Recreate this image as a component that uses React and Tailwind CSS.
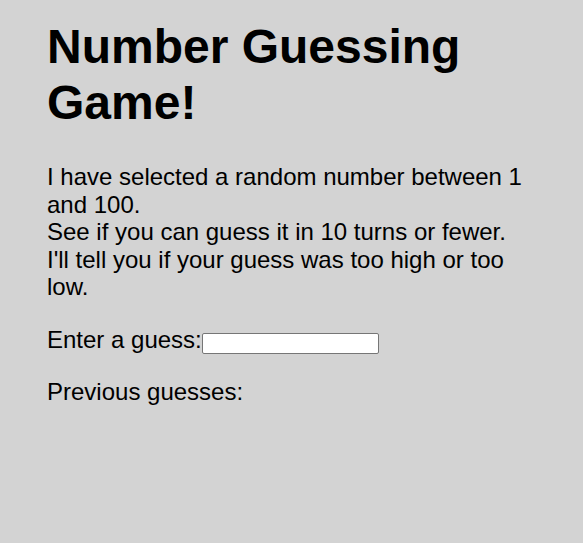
import React, { useState } from 'react';

export default function App() {
  const [guess, setGuess] = useState('');

  return (
    <div className="min-h-[543px] bg-[#d3d3d3] text-black font-['Liberation_Sans',Arial,sans-serif]">
      <div className="pl-[47px] pr-[40px] pt-[19px] text-[24px]">
        {/* Title */}
        <h1 className="text-[48px] font-bold leading-[56px] mb-[32px]">Number Guessing Game!</h1>

        {/* Intro */}
        <p className="leading-[27.6px] mb-[25px]">
          I have selected a random number between 1 and 100.
          <br />
          See if you can guess it in 10 turns or fewer.
          <br />
          I'll tell you if your guess was too high or too low.
        </p>

        {/* Guess field */}
        <div className="leading-[27.6px] mb-[24px]">
          <label htmlFor="guessField">Enter a guess:</label>
          <input
            id="guessField"
            type="text"
            value={guess}
            onChange={(e) => setGuess(e.target.value)}
            className="inline-block align-baseline w-[177px] h-[21px] bg-white border border-[#767676] rounded-[2px] px-[2px] text-[13.33px] outline-none"
          />
        </div>

        <p className="leading-[27.6px]">Previous guesses:</p>
      </div>
    </div>
  );
}
